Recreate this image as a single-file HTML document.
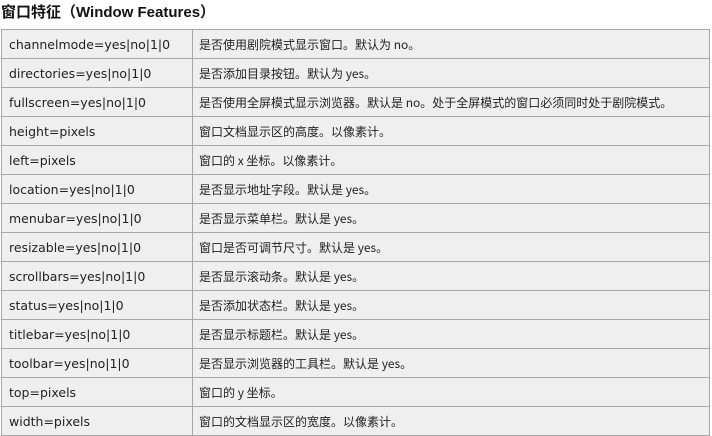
<!DOCTYPE html>
<html><head><meta charset="utf-8"><style>
body{margin:0;background:#fff;width:712px;height:436px;overflow:hidden;font-family:"DejaVu Sans","Liberation Sans","Noto Sans CJK SC",sans-serif;}
h3{margin:0;position:absolute;left:1px;top:1px;font-size:15px;font-weight:bold;color:#111;font-family:"Liberation Sans","Noto Sans CJK SC",sans-serif;}
table{position:absolute;left:1px;top:29px;border-collapse:collapse;width:709px;background:#efefef;}
td{border:1px solid #a8a8a8;height:28px;padding:0 0 0 7px;font-size:12.5px;color:#222;white-space:nowrap;}
td:first-child{width:183px;}
td:last-child{font-family:"Noto Sans CJK SC","DejaVu Sans",sans-serif;font-size:12px;padding-left:6px;}
</style></head><body>
<h3>窗口特征（Window Features）</h3>
<table>
<tr><td>channelmode=yes|no|1|0</td><td>是否使用剧院模式显示窗口。默认为 no。</td></tr>
<tr><td>directories=yes|no|1|0</td><td>是否添加目录按钮。默认为 yes。</td></tr>
<tr><td>fullscreen=yes|no|1|0</td><td>是否使用全屏模式显示浏览器。默认是 no。处于全屏模式的窗口必须同时处于剧院模式。</td></tr>
<tr><td>height=pixels</td><td>窗口文档显示区的高度。以像素计。</td></tr>
<tr><td>left=pixels</td><td>窗口的 x 坐标。以像素计。</td></tr>
<tr><td>location=yes|no|1|0</td><td>是否显示地址字段。默认是 yes。</td></tr>
<tr><td>menubar=yes|no|1|0</td><td>是否显示菜单栏。默认是 yes。</td></tr>
<tr><td>resizable=yes|no|1|0</td><td>窗口是否可调节尺寸。默认是 yes。</td></tr>
<tr><td>scrollbars=yes|no|1|0</td><td>是否显示滚动条。默认是 yes。</td></tr>
<tr><td>status=yes|no|1|0</td><td>是否添加状态栏。默认是 yes。</td></tr>
<tr><td>titlebar=yes|no|1|0</td><td>是否显示标题栏。默认是 yes。</td></tr>
<tr><td>toolbar=yes|no|1|0</td><td>是否显示浏览器的工具栏。默认是 yes。</td></tr>
<tr><td>top=pixels</td><td>窗口的 y 坐标。</td></tr>
<tr><td>width=pixels</td><td>窗口的文档显示区的宽度。以像素计。</td></tr>
</table>
</body></html>
